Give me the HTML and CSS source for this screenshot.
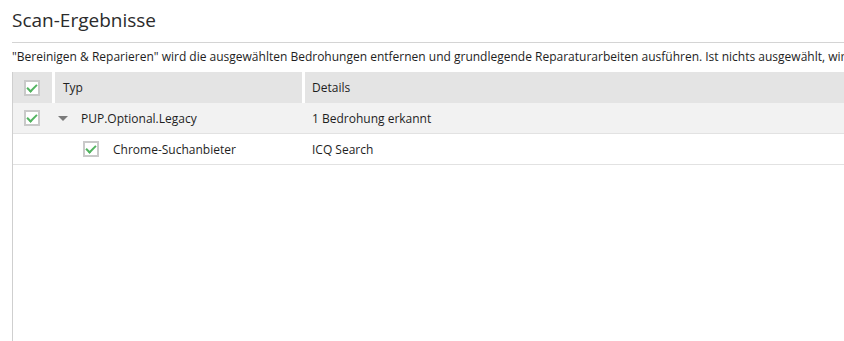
FILE: index.html
```html
<!DOCTYPE html>
<html lang="de">
<head>
    <meta charset="UTF-8">
    <title>Scan-Ergebnisse</title>
    <link rel="stylesheet" href="styles.css">
</head>
<body>
    <div class="page">
        <h1 class="title">Scan-Ergebnisse</h1>
        <p class="hint">"Bereinigen &amp; Reparieren" wird die ausgewählten Bedrohungen entfernen und grundlegende Reparaturarbeiten ausführen. Ist nichts ausgewählt, wird nichts entfernt.</p>

        <div class="results">
            <div class="row head">
                <div class="cell check"><span class="box"></span></div>
                <div class="cell type">Typ</div>
                <div class="cell details">Details</div>
            </div>
            <div class="row group">
                <div class="cell check"><span class="box"></span></div>
                <div class="cell type"><span class="caret"></span>PUP.Optional.Legacy</div>
                <div class="cell details">1 Bedrohung erkannt</div>
            </div>
            <div class="row item">
                <div class="cell check"></div>
                <div class="cell type"><span class="box"></span>Chrome-Suchanbieter</div>
                <div class="cell details">ICQ Search</div>
            </div>
        </div>
    </div>
</body>
</html>
```

FILE: styles.css
```css
* {
    box-sizing: border-box;
}

body {
    margin: 0;
    font-family: "Open Sans", Arial, sans-serif;
    color: #1e1e1e;
    background-color: #fff;
    overflow: hidden;
}

.page {
    padding-left: 12px;
}

.title {
    margin: 0;
    padding: 5px 0 7px 0;
    font-size: 19px;
    font-weight: normal;
    line-height: 30px;
    color: #2b2b2b;
    border-bottom: 1px solid #d4d4d4;
}

.hint {
    margin: 0;
    padding: 4px 0 5px 0;
    font-size: 12px;
    line-height: 20px;
    white-space: nowrap;
    overflow: hidden;
}

.results {
    border-left: 1px solid #cfcfcf;
    height: 280px;
}

.row {
    display: flex;
    height: 31px;
    font-size: 12px;
    border-bottom: 1px solid #e2e2e2;
}

.row.head {
    background-color: #e4e4e4;
    border-bottom: none;
}

.row.group {
    background-color: #f2f2f2;
}

.cell {
    display: flex;
    align-items: center;
}

.cell.check {
    width: 39px;
    padding-left: 11px;
}

.cell.type {
    width: 250px;
    padding-left: 6px;
}

.cell.details {
    flex: 1;
    padding-left: 10px;
}

.head .cell.type,
.head .cell.details {
    border-left: 3px solid #fff;
}

.head .cell.type {
    padding-left: 8px;
}

.head .cell.details {
    padding-left: 7px;
}

.box {
    width: 16px;
    height: 16px;
    border: 2px solid #c9c9c9;
    background-color: #fff;
    position: relative;
    flex-shrink: 0;
}

.box::after {
    content: "";
    position: absolute;
    left: 3px;
    top: 0;
    width: 4px;
    height: 8px;
    border-right: 2px solid #52b460;
    border-bottom: 2px solid #52b460;
    transform: rotate(45deg);
}

.item .cell.type {
    padding-left: 31px;
}

.item .box {
    margin-right: 14px;
}

.caret {
    width: 0;
    height: 0;
    border-left: 5px solid transparent;
    border-right: 5px solid transparent;
    border-top: 5px solid #7a7a7a;
    margin-right: 13px;
}
```
